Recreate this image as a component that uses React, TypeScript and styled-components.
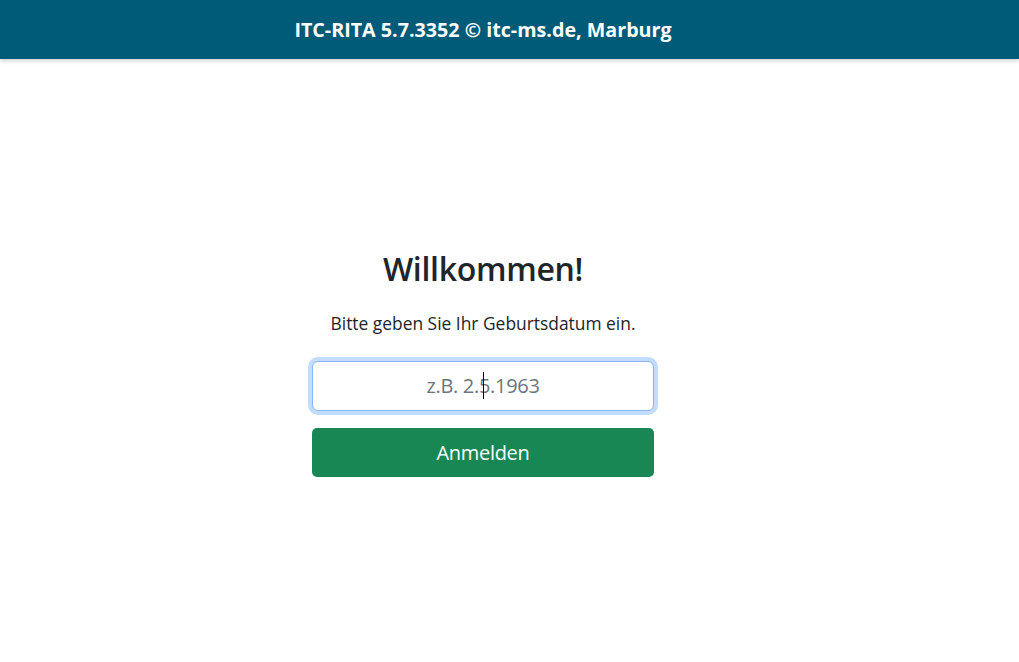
import React from "react";
import styled, { createGlobalStyle } from "styled-components";

const GlobalStyle = createGlobalStyle`
  html, body {
    margin: 0;
    padding: 0;
    background: #fff;
  }
  body {
    font-family: "Open Sans", "Noto Sans", "Liberation Sans", sans-serif;
    color: #212529;
  }
  * {
    box-sizing: border-box;
  }
`;

const Page = styled.div`
  min-height: 662px;
  display: flex;
  flex-direction: column;
`;

const Header = styled.header`
  height: 59px;
  background: #005b78;
  box-shadow: 0 2px 4px rgba(0, 0, 0, 0.18);
  display: flex;
  align-items: center;
  justify-content: center;
  padding: 0 53px 1px 0;
`;

const HeaderTitle = styled.h1`
  margin: 0;
  color: #fff;
  font-size: 19.7px;
  font-weight: 700;
`;

const Main = styled.main`
  display: flex;
  justify-content: center;
  padding: 191px 53px 0 0;
`;

const LoginBox = styled.div`
  width: 342px;
  display: flex;
  flex-direction: column;
  align-items: stretch;
  text-align: center;
`;

const Title = styled.h2`
  margin: 0 0 22px;
  font-size: 32px;
  font-weight: 600;
  line-height: 1.2;
  letter-spacing: -0.3px;
`;

const Hint = styled.p`
  margin: 0 0 24px;
  font-size: 17.4px;
  line-height: 1.5;
`;

const InputWrap = styled.div`
  position: relative;
  margin-bottom: 17px;
`;

const DateInput = styled.input`
  width: 100%;
  height: 50px;
  padding: 8px 16px;
  font-family: inherit;
  font-size: 20px;
  text-align: center;
  color: #212529;
  border: 1px solid #86b7fe;
  border-radius: 6px;
  outline: none;
  box-shadow: 0 0 0 4px rgba(13, 110, 253, 0.25);
  caret-color: transparent;
  letter-spacing: -0.3px;

  &::placeholder {
    color: #6c757d;
  }
`;

const Caret = styled.span`
  position: absolute;
  left: 171px;
  top: 11px;
  width: 1px;
  height: 27px;
  background: #000;
`;

const SubmitButton = styled.button`
  height: 49px;
  border: none;
  border-radius: 5px;
  background: #198754;
  color: #fff;
  font-family: inherit;
  font-size: 20px;
  letter-spacing: -0.3px;
  cursor: pointer;
`;

export default function App() {
  return (
    <Page>
      <GlobalStyle />
      <Header>
        <HeaderTitle>ITC-RITA 5.7.3352 © itc-ms.de, Marburg</HeaderTitle>
      </Header>
      <Main>
        <LoginBox>
          <Title>Willkommen!</Title>
          <Hint>Bitte geben Sie Ihr Geburtsdatum ein.</Hint>
          <InputWrap>
            <DateInput type="text" placeholder="z.B. 2.5.1963" />
            <Caret />
          </InputWrap>
          <SubmitButton type="button">Anmelden</SubmitButton>
        </LoginBox>
      </Main>
    </Page>
  );
}
